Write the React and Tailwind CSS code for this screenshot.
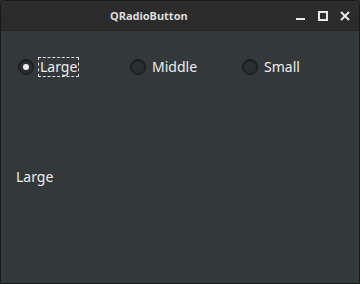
export default function App() {
  const font = { fontFamily: '"Noto Sans", "Open Sans", sans-serif' };
  const Radio = ({ checked }) => (
    <span className="relative flex h-[16px] w-[16px] items-center justify-center rounded-full border border-[#151819] bg-[radial-gradient(circle_at_50%_40%,#2e3436,#23282a)] shadow-[inset_0_1px_1px_rgba(0,0,0,0.4)]">
      {checked && <span className="h-[6px] w-[6px] rounded-full bg-[#eeeeec]" />}
    </span>
  );
  return (
    <div className="h-[284px] w-[360px] bg-[#2b2b2b]" style={font}>
      <div className="flex h-full w-full flex-col overflow-hidden rounded-t-[6px] border border-[#1a1a1a] bg-[#33393b]">
        <div className="relative flex h-[30px] shrink-0 items-center bg-[linear-gradient(#2d2d2d,#2a2a2a)] border-b border-[#262626]">
          <span className="absolute left-[109px] top-[7px] text-[11px] font-bold leading-[16px] text-[#dcdcdc]">QRadioButton</span>
          <svg className="absolute left-[294px] top-[9px]" width="12" height="12" viewBox="0 0 12 12">
            <rect x="1" y="8" width="9" height="2" fill="#e8e8e8" />
          </svg>
          <svg className="absolute left-[316px] top-[9px]" width="12" height="12" viewBox="0 0 12 12">
            <rect x="2" y="2" width="8" height="8" fill="none" stroke="#e8e8e8" strokeWidth="2" />
          </svg>
          <svg className="absolute left-[338px] top-[9px]" width="12" height="12" viewBox="0 0 12 12">
            <path d="M2 2 L10 10 M10 2 L2 10" stroke="#e8e8e8" strokeWidth="2" />
          </svg>
        </div>
        <div className="flex flex-col px-[9px]">
          <div className="ml-[8px] mt-[26px] flex items-center">
            <div className="flex w-[112px] items-center">
              <Radio checked />
              <span className="ml-[4px] border border-dashed border-[#e0e0e0] px-[1px] text-[14px] leading-[18px] text-[#eeeeec]">Large</span>
            </div>
            <div className="flex w-[112px] items-center">
              <Radio />
              <span className="ml-[6px] text-[14px] leading-[20px] text-[#eeeeec]">Middle</span>
            </div>
            <div className="flex items-center">
              <Radio />
              <span className="ml-[6px] text-[14px] leading-[20px] text-[#eeeeec]">Small</span>
            </div>
          </div>
          <div className="ml-[6px] mt-[90px] text-[14px] leading-[20px] text-[#eeeeec]">Large</div>
        </div>
      </div>
    </div>
  );
}
